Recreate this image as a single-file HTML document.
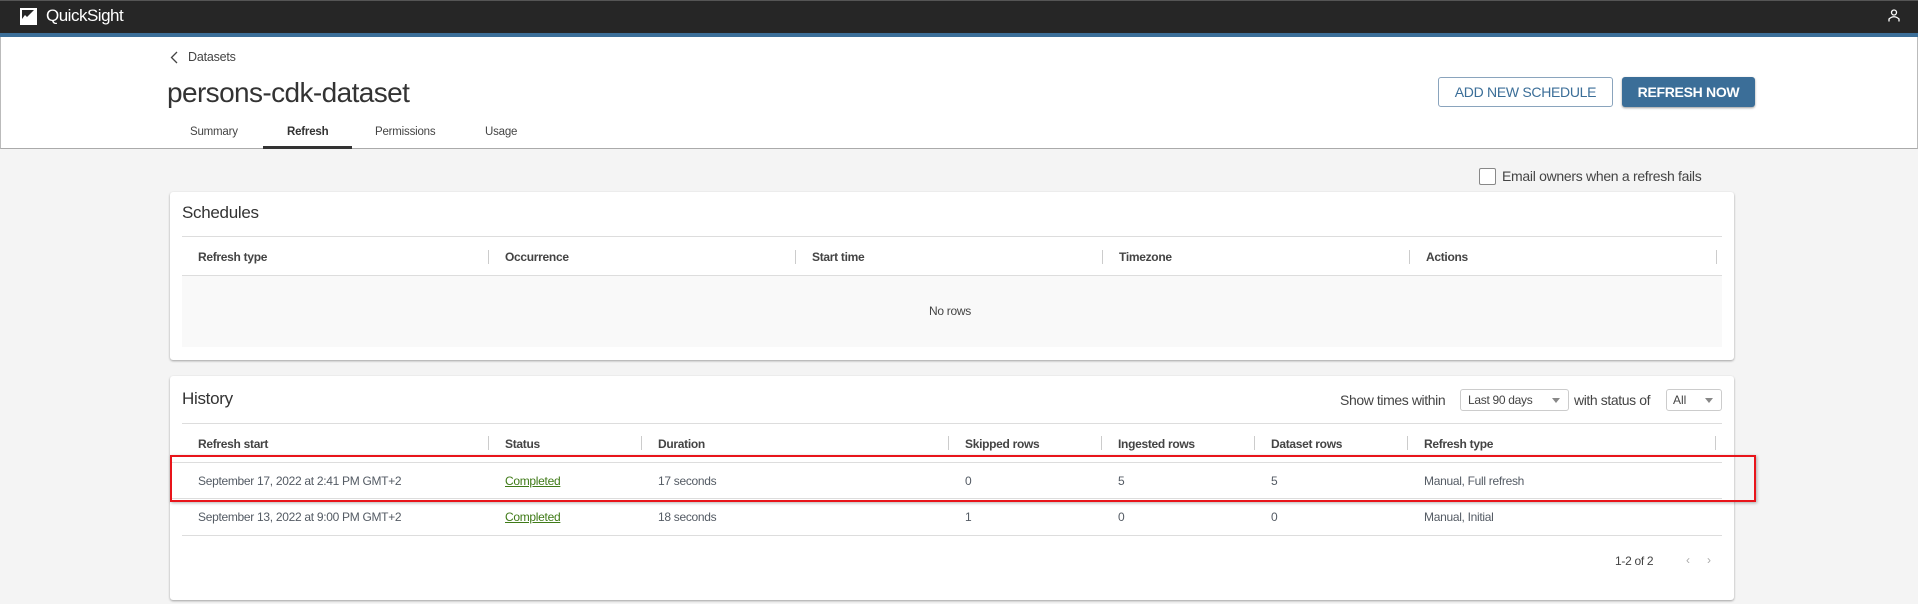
<!DOCTYPE html>
<html><head><meta charset="utf-8"><style>
*{box-sizing:border-box;margin:0;padding:0}
body{width:1918px;height:604px;overflow:hidden;background:#f4f4f4;font-family:"Liberation Sans",sans-serif;color:#444;position:relative}
.a{position:absolute;white-space:nowrap}
.top{position:absolute;left:0;top:0;width:1918px;height:33px;background:#262626;border-top:1px solid #555}
.blue{position:absolute;left:0;top:33px;width:1918px;height:4px;background:#3b6e98}
.hdr{position:absolute;left:0;top:37px;width:1918px;height:112px;background:#fff;border-bottom:1px solid #aaa;border-left:1px solid #bbb;border-right:1px solid #bbb}
.card{position:absolute;background:#fff;border-radius:3px;box-shadow:0 1px 2px rgba(0,0,0,.35)}
.th{font-size:12px;font-weight:bold;color:#444;letter-spacing:-.3px}
.td{font-size:12px;color:#545b64;letter-spacing:-.3px}
.sep{position:absolute;width:1px;height:14px;background:#ccc}
.hl{position:absolute;height:1px;background:#ddd}
</style></head><body>
<div class="top"></div>
<svg class="a" style="left:20px;top:8px" width="17" height="17" viewBox="0 0 17 17"><rect width="17" height="17" fill="#fff"/><path d="M2 2 H14 L7 9 L5 7 L2 11 Z" fill="#262626"/></svg>
<div class="a" style="left:46px;top:6px;font-size:17px;color:#fff;letter-spacing:-.5px">QuickSight</div>
<svg class="a" style="left:1888px;top:9px" width="12" height="13" viewBox="0 0 12 13"><circle cx="6" cy="3.5" r="2.5" fill="none" stroke="#fff" stroke-width="1.3"/><path d="M1 12.5 V10 Q6 5.5 11 10 V12.5" fill="none" stroke="#fff" stroke-width="1.3"/></svg>
<div class="blue"></div>
<div class="hdr"></div>
<svg class="a" style="left:170px;top:51px" width="8" height="13" viewBox="0 0 8 13"><path d="M7 1 L1.5 6.5 L7 12" fill="none" stroke="#444" stroke-width="1.3"/></svg>
<div class="a" style="left:188px;top:50px;font-size:12.5px;color:#444;letter-spacing:-.2px">Datasets</div>
<div class="a" style="left:167px;top:77px;font-size:28px;color:#333;letter-spacing:-.6px">persons-cdk-dataset</div>
<div class="a" style="left:1438px;top:77px;width:175px;height:30px;border:1px solid #8aa4bd;border-radius:3px;background:#fff;font-size:14px;color:#3b6e98;text-align:center;line-height:28px;letter-spacing:-.3px">ADD NEW SCHEDULE</div>
<div class="a" style="left:1622px;top:77px;width:133px;height:30px;border-radius:3px;background:#3b6e98;font-size:14px;font-weight:bold;color:#fff;text-align:center;line-height:30px;box-shadow:0 1px 2px rgba(0,0,0,.4);letter-spacing:-.3px">REFRESH NOW</div>
<div class="a" style="left:190px;top:126px;font-size:11.5px;color:#444;letter-spacing:-.2px">Summary</div>
<div class="a" style="left:287px;top:126px;font-size:11.5px;color:#333;font-weight:bold;letter-spacing:-.2px">Refresh</div>
<div class="a" style="left:375px;top:126px;font-size:11.5px;color:#444;letter-spacing:-.2px">Permissions</div>
<div class="a" style="left:485px;top:126px;font-size:11.5px;color:#444;letter-spacing:-.2px">Usage</div>
<div class="a" style="left:263px;top:146px;width:89px;height:3px;background:#333"></div>

<div class="a" style="left:1479px;top:168px;width:17px;height:17px;border:1px solid #888;border-radius:2px;background:#fff"></div>
<div class="a" style="left:1502px;top:168px;font-size:14px;color:#444;letter-spacing:-.3px">Email owners when a refresh fails</div>

<div class="card" style="left:170px;top:192px;width:1564px;height:168px"></div>
<div class="a" style="left:182px;top:203px;font-size:17px;color:#333;letter-spacing:-.3px">Schedules</div>
<div class="hl" style="left:182px;top:236px;width:1540px"></div>
<div class="a th" style="left:198px;top:250px">Refresh type</div>
<div class="a th" style="left:505px;top:250px">Occurrence</div>
<div class="a th" style="left:812px;top:250px">Start time</div>
<div class="a th" style="left:1119px;top:250px">Timezone</div>
<div class="a th" style="left:1426px;top:250px">Actions</div>
<div class="sep" style="left:488px;top:250px"></div><div class="sep" style="left:795px;top:250px"></div><div class="sep" style="left:1102px;top:250px"></div><div class="sep" style="left:1409px;top:250px"></div><div class="sep" style="left:1716px;top:250px"></div>
<div class="a" style="left:182px;top:275px;width:1540px;height:72px;background:#f9f9f9;border-top:1px solid #ddd"></div>
<div class="a td" style="left:929px;top:304px;color:#444">No rows</div>

<div class="card" style="left:170px;top:376px;width:1564px;height:224px"></div>
<div class="a" style="left:182px;top:389px;font-size:17px;color:#333;letter-spacing:-.3px">History</div>
<div class="a" style="left:1340px;top:392px;font-size:14px;color:#444;letter-spacing:-.4px">Show times within</div>
<div class="a" style="left:1460px;top:389px;width:109px;height:22px;border:1px solid #ccc;border-radius:3px;background:#fff;font-size:12px;color:#444;line-height:20px;padding-left:7px;letter-spacing:-.3px">Last 90 days<span style="position:absolute;right:8px;top:8px;border-left:4px solid transparent;border-right:4px solid transparent;border-top:5px solid #888"></span></div>
<div class="a" style="left:1574px;top:392px;font-size:14px;color:#444;letter-spacing:-.4px">with status of</div>
<div class="a" style="left:1666px;top:389px;width:56px;height:22px;border:1px solid #ccc;border-radius:3px;background:#fff;font-size:12px;color:#444;line-height:20px;padding-left:6px">All<span style="position:absolute;right:8px;top:8px;border-left:4px solid transparent;border-right:4px solid transparent;border-top:5px solid #888"></span></div>
<div class="hl" style="left:182px;top:423px;width:1540px"></div>
<div class="a th" style="left:198px;top:437px">Refresh start</div>
<div class="a th" style="left:505px;top:437px">Status</div>
<div class="a th" style="left:658px;top:437px">Duration</div>
<div class="a th" style="left:965px;top:437px">Skipped rows</div>
<div class="a th" style="left:1118px;top:437px">Ingested rows</div>
<div class="a th" style="left:1271px;top:437px">Dataset rows</div>
<div class="a th" style="left:1424px;top:437px">Refresh type</div>
<div class="sep" style="left:488px;top:436px"></div><div class="sep" style="left:641px;top:436px"></div><div class="sep" style="left:948px;top:436px"></div><div class="sep" style="left:1101px;top:436px"></div><div class="sep" style="left:1254px;top:436px"></div><div class="sep" style="left:1407px;top:436px"></div><div class="sep" style="left:1715px;top:436px"></div>
<div class="hl" style="left:172px;top:462px;width:1550px"></div>
<div class="a td" style="left:198px;top:474px">September 17, 2022 at 2:41 PM GMT+2</div>
<div class="a td" style="left:505px;top:474px;color:#3f7a17;text-decoration:underline">Completed</div>
<div class="a td" style="left:658px;top:474px">17 seconds</div>
<div class="a td" style="left:965px;top:474px">0</div>
<div class="a td" style="left:1118px;top:474px">5</div>
<div class="a td" style="left:1271px;top:474px">5</div>
<div class="a td" style="left:1424px;top:474px">Manual, Full refresh</div>
<div class="hl" style="left:172px;top:498px;width:1550px"></div>
<div class="a td" style="left:198px;top:510px">September 13, 2022 at 9:00 PM GMT+2</div>
<div class="a td" style="left:505px;top:510px;color:#3f7a17;text-decoration:underline">Completed</div>
<div class="a td" style="left:658px;top:510px">18 seconds</div>
<div class="a td" style="left:965px;top:510px">1</div>
<div class="a td" style="left:1118px;top:510px">0</div>
<div class="a td" style="left:1271px;top:510px">0</div>
<div class="a td" style="left:1424px;top:510px">Manual, Initial</div>
<div class="hl" style="left:182px;top:535px;width:1540px"></div>
<div class="a td" style="left:1615px;top:554px;color:#444">1-2 of 2</div>
<div class="a td" style="left:1686px;top:553px;color:#aaa">‹</div>
<div class="a td" style="left:1707px;top:553px;color:#aaa">›</div>
<div class="a" style="left:170px;top:455px;width:1586px;height:47px;border:2px solid #e8141a;box-shadow:1px 1px 3px rgba(0,0,0,.3)"></div>
</body></html>
